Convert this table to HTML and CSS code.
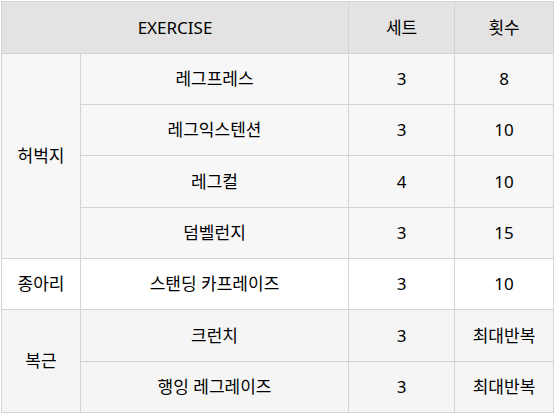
FILE: index.html
```html
<!DOCTYPE html>
<html lang="ko">
<head>
<meta charset="utf-8">
<link rel="stylesheet" href="styles.css">
</head>
<body>
<table class="plan">
  <colgroup>
    <col class="c-part">
    <col class="c-name">
    <col class="c-set">
    <col class="c-rep">
  </colgroup>
  <thead>
    <tr class="head">
      <th colspan="2">EXERCISE</th>
      <th>세트</th>
      <th>횟수</th>
    </tr>
  </thead>
  <tbody class="g-thigh">
    <tr class="r51"><td rowspan="4">허벅지</td><td>레그프레스</td><td>3</td><td>8</td></tr>
    <tr class="r51"><td>레그익스텐션</td><td>3</td><td>10</td></tr>
    <tr class="r52"><td>레그컬</td><td>4</td><td>10</td></tr>
    <tr class="r51"><td>덤벨런지</td><td>3</td><td>15</td></tr>
  </tbody>
  <tbody class="g-calf">
    <tr class="r51"><td>종아리</td><td>스탠딩 카프레이즈</td><td>3</td><td>10</td></tr>
  </tbody>
  <tbody class="g-abs">
    <tr class="r52"><td rowspan="2">복근</td><td>크런치</td><td>3</td><td>최대반복</td></tr>
    <tr class="r51"><td>행잉 레그레이즈</td><td>3</td><td>최대반복</td></tr>
  </tbody>
</table>
</body>
</html>
```

FILE: styles.css
```css
html, body {
  margin: 0;
  padding: 0;
  background: #ffffff;
}
body {
  padding: 1px;
  font-family: "Noto Sans", "Noto Sans CJK KR", sans-serif;
  font-size: 17px;
  color: #000;
}
.plan {
  border-collapse: collapse;
  table-layout: fixed;
  width: 552px;
}
.c-part { width: 79px; }
.c-name { width: 268px; }
.c-set { width: 106px; }
.c-rep { width: 99px; }
.plan th, .plan td {
  border: 1px solid #d3d3d3;
  padding: 0;
  text-align: center;
  vertical-align: middle;
  font-weight: normal;
  line-height: 18px;
}
.plan .head { height: 52px; }
.plan .head th { background: #e3e3e3; }
.plan .r52 { height: 52px; }
.plan .r51 { height: 51px; }
.g-thigh td { background: #f7f7f7; }
.g-calf td { background: #ffffff; }
.g-abs td { background: #f5f5f5; }
```
